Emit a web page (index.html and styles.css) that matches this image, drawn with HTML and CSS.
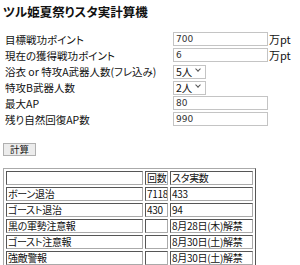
FILE: index.html
```html
<!doctype html>
<html lang="ja">
<head>
	<meta charset="utf-8">
	<title>ツル姫夏祭りスタ実計算機</title>
<link rel="stylesheet" href="styles.css">
</head>
<body>
<h1 class="title">ツル姫夏祭りスタ実計算機</h1>

<form class="calc-form">
<div class="row"><label for="target">目標戦功ポイント</label><input id="target" class="num" type="text" value="700"><span class="unit">万pt</span></div>
<div class="row"><label for="current">現在の獲得戦功ポイント</label><input id="current" class="num" type="text" value="6"><span class="unit">万pt</span></div>
<div class="row"><label for="yukata">浴衣 or 特攻A武器人数(フレ込み)</label><span class="select-wrap"><select id="yukata" class="people"><option>5人</option></select></span></div>
<div class="row"><label for="bweapon">特攻B武器人数</label><span class="select-wrap"><select id="bweapon" class="people"><option>2人</option></select></span></div>
<div class="row"><label for="maxap">最大AP</label><input id="maxap" class="num" type="text" value="80"></div>
<div class="row"><label for="restap">残り自然回復AP数</label><input id="restap" class="num" type="text" value="990"></div>
<button type="button" class="calc-button">計算</button>
</form>

<table class="result">
<tr><td class="c-name"></td><td class="c-count">回数</td><td class="c-sta">スタ実数</td></tr>
<tr><td>ボーン退治</td><td>7118</td><td>433</td></tr>
<tr><td>ゴースト退治</td><td>430</td><td>94</td></tr>
<tr><td>黒の軍勢注意報</td><td></td><td>8月28日(木)解禁</td></tr>
<tr><td>ゴースト注意報</td><td></td><td>8月30日(土)解禁</td></tr>
<tr><td>強敵警報</td><td></td><td>8月30日(土)解禁</td></tr>
</table>
</body>
</html>
```

FILE: styles.css
```css
body {
	margin: 0;
	padding: 2px 3px;
	color: #111;
	background: #fff;
	font-family: "Noto Sans CJK JP", sans-serif;
	font-size: 10.5px;
	font-feature-settings: "palt";
}

.title {
	margin: 0 0 9px;
	font-size: 12.5px;
	font-weight: bold;
	line-height: 20px;
}

.row {
	display: flex;
	align-items: center;
	height: 16px;
}

.row label {
	width: 168px;
	padding-left: 2px;
	white-space: nowrap;
}

input.num {
	box-sizing: border-box;
	width: 95px;
	height: 14px;
	margin: 0;
	padding: 0 2px;
	border: 1px solid #c4c4c4;
	font-family: "DejaVu Sans", sans-serif;
	font-size: 9px;
	color: #333;
}

.unit {
	margin-left: 1px;
	font-size: 11px;
}

.select-wrap {
	position: relative;
	display: inline-block;
}

.select-wrap::after {
	content: "";
	position: absolute;
	right: 6px;
	top: 3px;
	width: 3px;
	height: 3px;
	border-right: 1px solid #555;
	border-bottom: 1px solid #555;
	transform: rotate(45deg);
	pointer-events: none;
}

select.people {
	box-sizing: border-box;
	width: 33px;
	height: 14px;
	margin: 0;
	padding: 0 2px;
	border: 1px solid #c4c4c4;
	background: #fff;
	appearance: none;
	-webkit-appearance: none;
	font-family: "Noto Sans CJK JP", sans-serif;
	font-size: 10.5px;
	line-height: 12px;
	color: #111;
}

.calc-button {
	display: block;
	box-sizing: border-box;
	width: 33px;
	height: 13px;
	margin: 16px 0 0;
	padding: 0;
	border: 1px solid #b0b0b0;
	background: #ececec;
	font-family: "Noto Sans CJK JP", sans-serif;
	font-size: 9.5px;
	line-height: 11px;
	color: #111;
}

table.result {
	table-layout: fixed;
	width: 253px;
	margin-top: 12px;
	border: 1px outset #aaa;
	border-spacing: 2px;
	font-size: 10px;
	letter-spacing: -0.3px;
}

table.result td {
	padding: 0 1px;
	border: 1px inset #aaa;
	line-height: 12px;
	white-space: nowrap;
	overflow: hidden;
}

.c-name {
	width: 133px;
}

.c-count {
	width: 19px;
}
```
